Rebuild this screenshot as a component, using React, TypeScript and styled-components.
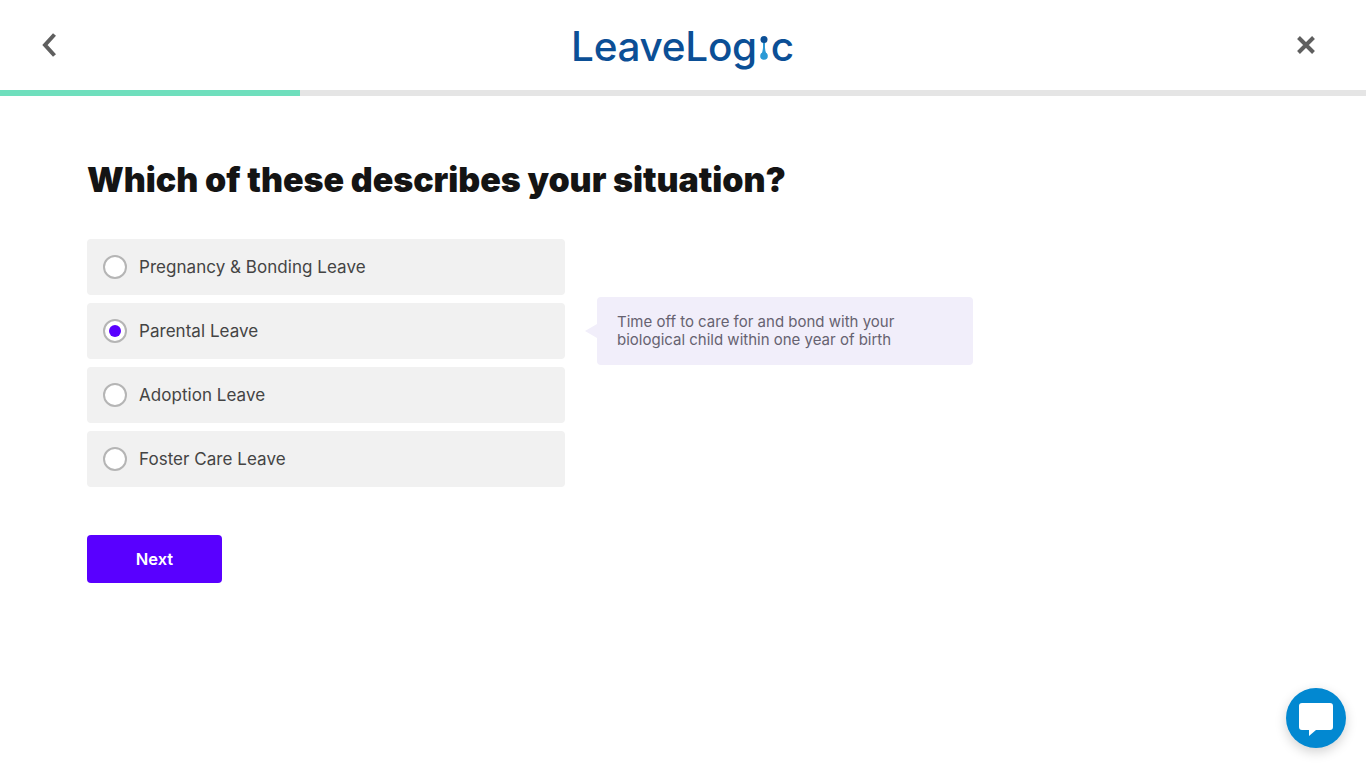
import React from "react";
import styled, { createGlobalStyle } from "styled-components";

const GlobalStyle = createGlobalStyle`
  html, body {
    margin: 0;
    padding: 0;
    background: #fff;
    font-family: "Inter", "Liberation Sans", sans-serif;
  }
  * {
    box-sizing: border-box;
  }
`;

const Page = styled.div`
  height: 768px;
  overflow: hidden;
  position: relative;
`;

const Header = styled.header`
  height: 90px;
  padding: 0 47px 0 36px;
  display: flex;
  align-items: center;
  justify-content: space-between;
`;

const IconButton = styled.button`
  width: 26px;
  height: 26px;
  padding: 0;
  border: 0;
  background: none;
  display: flex;
  align-items: center;
  justify-content: center;
  cursor: pointer;
`;

const Logo = styled.div`
  margin: 3px 0 0 10px;
  display: flex;
  align-items: center;
  font-family: "Inter", sans-serif;
  font-weight: 500;
  font-size: 40.5px;
  line-height: 56px;
  letter-spacing: -0.3px;
  color: #0b4f96;
`;

const LogoDots = styled.svg`
  width: 10px;
  height: 30px;
  margin: 6px 2px 0 2px;
`;

const Progress = styled.div`
  height: 6px;
  background: #e5e5e5;
`;

const ProgressFill = styled.div`
  height: 100%;
  background: #6fdfbd;
`;

const Main = styled.main`
  padding: 63px 0 0 87px;
`;

const Title = styled.h1`
  margin: 0 0 38px;
  font-family: "Inter", sans-serif;
  font-weight: 900;
  font-size: 34px;
  line-height: 42px;
  letter-spacing: -0.05px;
  color: #141414;
`;

const Row = styled.div`
  display: flex;
  align-items: flex-start;
  gap: 32px;
`;

const Options = styled.div`
  width: 478px;
  display: flex;
  flex-direction: column;
  gap: 8px;
`;

const Option = styled.label`
  height: 56px;
  padding: 0 16px;
  display: flex;
  align-items: center;
  gap: 12px;
  background: #f1f1f1;
  border-radius: 4px;
  font-size: 17px;
  letter-spacing: 0.04px;
  color: #444;
  cursor: pointer;
`;

const Radio = styled.span<{ $checked?: boolean }>`
  width: 24px;
  height: 24px;
  border-radius: 50%;
  border: 2px solid #b5b5b5;
  background: #fff;
  display: flex;
  align-items: center;
  justify-content: center;

  &::after {
    content: "";
    display: ${(p) => (p.$checked ? "block" : "none")};
    width: 12px;
    height: 12px;
    border-radius: 50%;
    background: #5900ff;
  }
`;

const Hint = styled.div`
  position: relative;
  margin-top: 58px;
  width: 376px;
  height: 68px;
  padding: 16px 20px;
  background: #f1eefa;
  border-radius: 4px;
  font-size: 15px;
  line-height: 18px;
  color: #666270;

  &::before {
    content: "";
    position: absolute;
    left: -12px;
    top: 27px;
    border-top: 7px solid transparent;
    border-bottom: 7px solid transparent;
    border-right: 12px solid #f1eefa;
  }
`;

const NextButton = styled.button`
  margin-top: 48px;
  width: 135px;
  height: 48px;
  border: 0;
  border-radius: 4px;
  background: #5900ff;
  color: #fff;
  font-family: "Inter", sans-serif;
  font-size: 16.5px;
  font-weight: 600;
  cursor: pointer;
`;

const ChatButton = styled.button`
  position: fixed;
  right: 20px;
  bottom: 20px;
  width: 60px;
  height: 60px;
  padding: 0;
  border: 0;
  border-radius: 50%;
  background: #0288d1;
  box-shadow: 0 4px 12px rgba(0, 0, 0, 0.18);
  display: flex;
  align-items: center;
  justify-content: center;
`;

const options = [
  "Pregnancy & Bonding Leave",
  "Parental Leave",
  "Adoption Leave",
  "Foster Care Leave",
];

export default function App(): React.JSX.Element {
  return (
    <Page>
      <GlobalStyle />
      <Header>
        <IconButton aria-label="Back">
          <svg width="18" height="26" viewBox="0 0 18 26">
            <path d="M14.5 2.5 L5 13 L14.5 23.5" fill="none" stroke="#5f5f5f" strokeWidth="4" />
          </svg>
        </IconButton>
        <Logo>
          LeaveLog
          <LogoDots viewBox="0 0 10 30">
            <path d="M3.8 7 C4.2 11 4.2 14 3 18 H7 C5.8 14 5.8 11 6.2 7z" fill="#2a9ad6" />
            <circle cx="5" cy="4.5" r="3.5" fill="#0b4f96" />
            <circle cx="5" cy="21" r="3.8" fill="#2a9ad6" />
          </LogoDots>
          c
        </Logo>
        <IconButton aria-label="Close">
          <svg width="20" height="20" viewBox="0 0 20 20">
            <path d="M2.5 2.5 L17.5 17.5 M17.5 2.5 L2.5 17.5" stroke="#5f5f5f" strokeWidth="4" />
          </svg>
        </IconButton>
      </Header>
      <Progress>
        <ProgressFill style={{ width: `${(300 / 1366) * 100}%` }} />
      </Progress>
      <Main>
        <Title>Which of these describes your situation?</Title>
        <Row>
          <Options>
            {options.map((label) => (
              <Option key={label}>
                <Radio $checked={label === "Parental Leave"} />
                {label}
              </Option>
            ))}
          </Options>
          <Hint>
            Time off to care for and bond with your
            <br />
            biological child within one year of birth
          </Hint>
        </Row>
        <NextButton>Next</NextButton>
      </Main>
      <ChatButton aria-label="Chat">
        <svg width="36" height="36" viewBox="0 0 36 36">
          <path
            d="M4 3 H32 a3 3 0 0 1 3 3 V27 a3 3 0 0 1 -3 3 H18 L11 36 V30 H4 a3 3 0 0 1 -3 -3 V6 a3 3 0 0 1 3 -3z"
            fill="#fff"
          />
        </svg>
      </ChatButton>
    </Page>
  );
}
